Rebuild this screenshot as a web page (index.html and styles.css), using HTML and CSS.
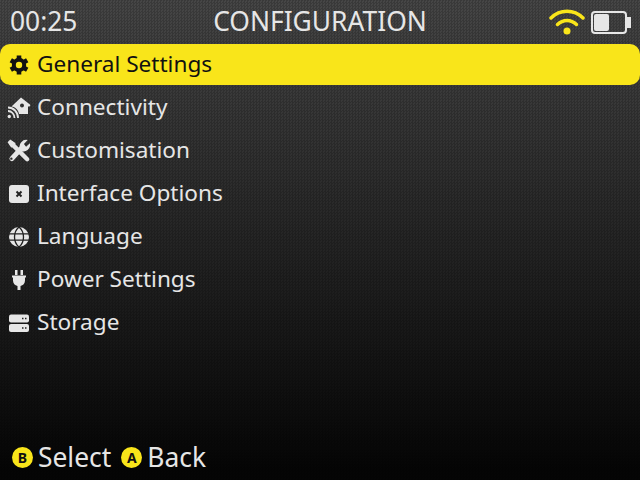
FILE: index.html
```html
<!DOCTYPE html>
<html lang="en">
<head>
    <meta charset="UTF-8">
    <title>Configuration</title>
    <link rel="stylesheet" href="styles.css">
</head>
<body>
    <div class="screen">
        <div class="topbar">
            <span class="clock">00:25</span>
            <span class="title">CONFIGURATION</span>
            <div class="status">
                <svg class="wifi" width="36" height="26" viewBox="0 1 36 26">
                    <path d="M2 10 C11 1 25 1 34 10" fill="none" stroke="#f9e51a" stroke-width="3.500" stroke-linecap="round"/>
                    <path d="M8.500 16.500 C14 11 22 11 27.500 16.500" fill="none" stroke="#f9e51a" stroke-width="3.500" stroke-linecap="round"/>
                    <circle cx="18" cy="23" r="3.500" fill="#f9e51a"/>
                </svg>
                <div class="battery"><div class="battery-fill"></div></div>
            </div>
        </div>
        <ul class="menu">
            <li class="item active">
                <svg class="icon" viewBox="0 0 20 20">
                    <circle cx="10" cy="10" r="7.200" fill="currentColor"/>
                    <path d="M10 0.500v19M1.800 5.250l16.400 9.500M1.800 14.750l16.400-9.500" stroke="currentColor" stroke-width="4.600"/>
                    <circle cx="10" cy="10" r="3.200" fill="#f9e51a"/>
                </svg>
                <span>General Settings</span>
            </li>
            <li class="item">
                <svg class="icon icon-wide" viewBox="0 0 24 22"><path fill="currentColor" fill-rule="evenodd" d="M14 0.500l9.500 7.500-1 1.500h-1.500V17h-9c-.5-4-3.500-7-7.500-7.500zM13 8.500a2 2 0 1 0 4 0 2 2 0 0 0-4 0z"/><circle cx="2.300" cy="19.500" r="1.700" fill="currentColor"/><path d="M1 14c3.500 0 6.500 3 6.500 7M1 10.500c5.500 0 10 4.500 10 10.500" fill="none" stroke="currentColor" stroke-width="1.800"/></svg>
                <span>Connectivity</span>
            </li>
            <li class="item">
                <svg class="icon icon-tall" viewBox="0 0 22 22"><path d="M4.500 18L13 8.500" stroke="currentColor" stroke-width="4.500" stroke-linecap="round"/><path fill="currentColor" d="M12 9a6 6 0 0 1 7-8l-3.500 3.500 2 2.500 3.500-3a6 6 0 0 1-8 7z"/><path d="M4 4l14.500 14.500" stroke="currentColor" stroke-width="4" stroke-linecap="round"/><path fill="currentColor" d="M0.500 3l2.500-2.500 5 3.500-4 4z"/><circle cx="4" cy="18" r="1.100" fill="#2e2e2e"/></svg>
                <span>Customisation</span>
            </li>
            <li class="item">
                <svg class="icon" viewBox="0 0 20 20"><rect y="1" width="20" height="18" rx="3" fill="currentColor"/><path d="M7.500 7.500l5 5M12.500 7.500l-5 5" stroke="#222" stroke-width="2"/></svg>
                <span>Interface Options</span>
            </li>
            <li class="item">
                <svg class="icon" viewBox="0 0 20 20"><circle cx="10" cy="10" r="10" fill="currentColor"/><path d="M0 6.800h20M0 13.200h20M10 0c-6 5-6 15 0 20M10 0c6 5 6 15 0 20" fill="none" stroke="#222" stroke-width="1.300"/></svg>
                <span>Language</span>
            </li>
            <li class="item">
                <svg class="icon" viewBox="0 0 20 20"><path fill="currentColor" d="M6 0h2.500v5H6zM11.500 0H14v5h-2.500zM3 5.500h14v2h-1v3c0 3-2 5-4.500 5.500V20h-3v-4C6 15.500 4 13.500 4 10.500v-3H3z"/></svg>
                <span>Power Settings</span>
            </li>
            <li class="item">
                <svg class="icon" viewBox="0 0 20 20"><rect y="1.500" width="20" height="8" rx="2" fill="currentColor"/><rect y="11" width="20" height="8" rx="2" fill="currentColor"/><path d="M13 5.500h1.500M16 5.500h1.500M13 15h1.500M16 15h1.500" stroke="#222" stroke-width="1.500"/></svg>
                <span>Storage</span>
            </li>
        </ul>
        <div class="footer">
            <span class="btn">B</span><span class="label">Select</span>
            <span class="btn">A</span><span class="label">Back</span>
        </div>
    </div>
</body>
</html>
```

FILE: styles.css
```css
* {
    box-sizing: border-box;
    margin: 0;
    padding: 0;
}

body {
    width: 640px;
    height: 480px;
    overflow: hidden;
    background: #000;
    font-family: 'Noto Sans', sans-serif;
}

.screen {
    width: 640px;
    height: 480px;
    display: flex;
    flex-direction: column;
    color: #e6e6e6;
    background:
        repeating-conic-gradient(rgba(0,0,0,0.18) 0 25%, transparent 0 50%) 0 0 / 3px 3px,
        linear-gradient(#464646, #050505 470px);
}

.topbar {
    height: 44px;
    display: flex;
    align-items: center;
    justify-content: space-between;
    padding: 0 13px 0 10px;
    position: relative;
}

.clock, .title {
    font-size: 26.4px;
    margin-top: -2px;
}

.title {
    position: absolute;
    left: 0;
    right: 0;
    text-align: center;
}

.status {
    display: flex;
    align-items: center;
    gap: 6px;
}

.battery {
    width: 36px;
    height: 23px;
    border: 2px solid #e6e6e6;
    border-radius: 4px;
    padding: 1px;
    position: relative;
}

.battery::after {
    content: "";
    position: absolute;
    right: -6px;
    top: 4px;
    width: 4px;
    height: 11px;
    background: #e6e6e6;
}

.battery-fill {
    width: 15px;
    height: 100%;
    background: #e6e6e6;
    border-radius: 2px;
}

.menu {
    list-style: none;
    flex: 1;
}

.item {
    height: 41px;
    margin-bottom: 2px;
    display: flex;
    align-items: center;
    gap: 8px;
    padding-left: 9px;
    padding-bottom: 2px;
    font-size: 22.6px;
    border-radius: 10px;
}

.item.active {
    background: #f9e51a;
    color: #111;
}

.icon {
    width: 20px;
    height: 20px;
    margin-top: 2px;
}

.icon-wide, .icon-tall {
    width: 24px;
    height: 24px;
    margin: 2px -2px 0;
}

.footer {
    height: 44px;
    display: flex;
    align-items: center;
    padding-left: 12px;
    padding-bottom: 2px;
    font-size: 26.4px;
}

.btn {
    width: 21px;
    height: 21px;
    border-radius: 50%;
    background: #f9e51a;
    color: #111;
    font-size: 14px;
    font-weight: bold;
    text-align: center;
    line-height: 21px;
    margin-right: 5px;
}

.label {
    margin-right: 10px;
}
```
